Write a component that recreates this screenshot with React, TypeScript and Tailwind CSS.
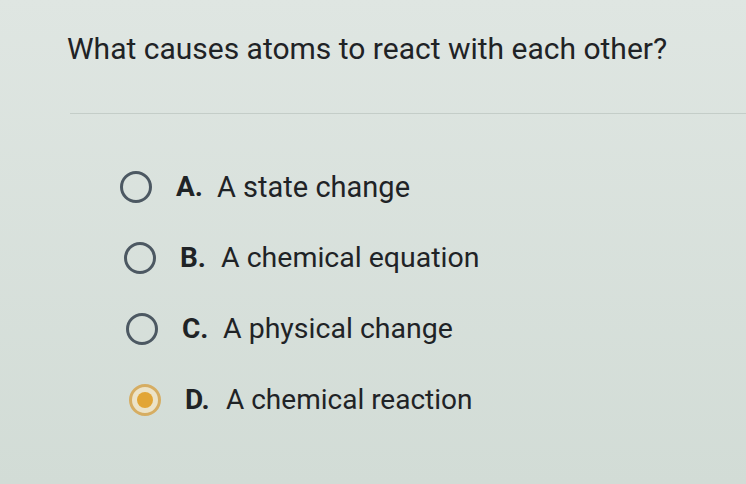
const OPTIONS = [
  { letter: "A.", text: "A state change", indent: "ml-[120px]", size: "text-[29px]", selected: false },
  { letter: "B.", text: "A chemical equation", indent: "ml-[124px]", size: "text-[28.5px]", selected: false },
  { letter: "C.", text: "A physical change", indent: "ml-[126px]", size: "text-[28.5px]", selected: false },
  { letter: "D.", text: "A chemical reaction", indent: "ml-[129px]", size: "text-[28px]", selected: true },
];

function Radio({ selected }: { selected: boolean }) {
  if (selected) {
    return (
      <span className="flex h-[32px] w-[32px] shrink-0 items-center justify-center rounded-full border-[3px] border-[#d6ad62] bg-[#ece3c8]">
        <span className="h-[16px] w-[16px] rounded-full bg-[#e2a535]" />
      </span>
    );
  }
  return (
    <span className="h-[32px] w-[32px] shrink-0 rounded-full border-[3px] border-[#4c5862]" />
  );
}

export default function App() {
  return (
    <div
      className="h-[484px] w-[746px] overflow-hidden bg-gradient-to-b from-[#dfe6e2] to-[#d2dcd6] text-[#1f2326]"
      style={{ fontFamily: "Roboto, 'Liberation Sans', sans-serif" }}
    >
      <h1 className="pl-[67px] pt-[29px] text-[30px] leading-[40px]">
        What causes atoms to react with each other?
      </h1>
      <div className="ml-[70px] mt-[44px] h-px bg-[#c4cdc8]" />
      <ul className="mt-[57px] flex flex-col gap-[39px]">
        {OPTIONS.map((o) => (
          <li key={o.letter} className={`flex items-center ${o.indent}`}>
            <Radio selected={o.selected} />
            <span className="ml-[24px] w-[41px] text-[28px] font-bold leading-[32px]">
              {o.letter}
            </span>
            <span className={`${o.size} leading-[32px]`}>{o.text}</span>
          </li>
        ))}
      </ul>
    </div>
  );
}
